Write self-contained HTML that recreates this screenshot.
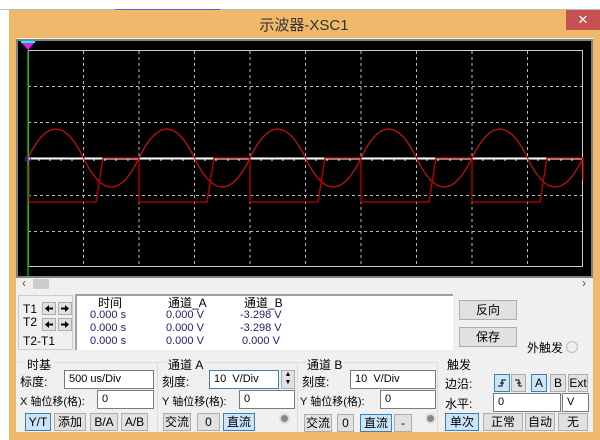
<!DOCTYPE html>
<html><head><meta charset="utf-8"><style>
*{margin:0;padding:0;box-sizing:border-box}
body{width:600px;height:440px;overflow:hidden;background:#fff;font-family:"Liberation Sans","Noto Sans CJK SC",sans-serif;font-size:12px;color:#000;position:relative}
.a{position:absolute}
.btn{position:absolute;background:#e1e1e1;border:1px solid #adadad;text-align:center;font-size:12px;line-height:16px;height:18px}
.sel{background:#cce4f7;border-color:#3c7fb1}
.in{position:absolute;background:#fff;border:1px solid #7a7a7a;height:19px;font-size:11px;line-height:17px;padding-left:4px}
.lbl{position:absolute;font-size:12px;white-space:nowrap}
.grp{position:absolute;border:1px solid #dcdcdc}
.v{position:absolute;color:#202070;font-size:11px;white-space:nowrap}
.btn svg{position:absolute;left:0;top:0}
</style></head><body>
<div class="a" style="left:0;top:0;width:600px;height:10px;background:#fff;border-bottom:1px solid #bbb"></div>
<div class="a" style="left:115px;top:9px;width:105px;height:2px;background:#6060e0"></div>
<div class="a" style="left:9px;top:10px;width:591px;height:430px;background:#f0b86a"></div>
<div class="a" style="left:0;top:0;width:600px;text-align:center;top:14px;font-size:15px;color:#333;left:4px">示波器-XSC1</div>
<div class="a" style="left:566px;top:10px;width:34px;height:20px;background:#c75050;color:#fff;text-align:center;font-size:13px;line-height:20px">✕</div>
<div class="a" style="left:16px;top:38px;width:577px;height:394px;background:#f0f0f0"></div>
<div class="a" style="left:16px;top:39px;width:577px;height:239px;background:#000;border:2px solid #808080"></div>
<svg class="a" style="left:0;top:0" width="600" height="300">
<g stroke="#bbb" stroke-width="1" stroke-dasharray="3,3" fill="none">
<path d="M83.5,51V267M139,51V267M194.5,51V267M250,51V267M305.5,51V267M361,51V267M416.5,51V267M472,51V267M527.5,51V267"/>
<path d="M28,86.5H583M28,122.5H583M28,195.5H583M28,231.5H583"/>
</g>
<rect x="28.5" y="50.5" width="554" height="216" fill="none" stroke="#ccc"/>
<path d="M28,158.5H583" stroke="#fff" stroke-width="2"/>
<path d="M28,158V161M39,158V161M50,158V161M61,158V161M72,158V161M94,158V161M105,158V161M116,158V161M128,158V161M150,158V161M161,158V161M172,158V161M183,158V161M205,158V161M216,158V161M228,158V161M239,158V161M261,158V161M272,158V161M283,158V161M294,158V161M316,158V161M327,158V161M339,158V161M350,158V161M372,158V161M383,158V161M394,158V161M405,158V161M427,158V161M438,158V161M450,158V161M461,158V161M483,158V161M494,158V161M505,158V161M516,158V161M538,158V161M549,158V161M561,158V161M572,158V161" stroke="#fff"/>
<path d="M28,158q27.75,-58 55.5,0t55.5,0t55.5,0t55.5,0t55.5,0t55.5,0t55.5,0t55.5,0t55.5,0t55.5,0" fill="none" stroke="#d01010" stroke-width="1.2"/>
<path d="M29,165V202H96L103,158H139V202H207L214,158H250V202H318L325,158H361V202H429L436,158H472V202H540L547,158H583V180" fill="none" stroke="#c00000" stroke-width="1.3"/>
<path d="M28,51V276" stroke="#0a0" stroke-width="1.5"/>
<path d="M21,42H35L28,50Z" fill="#e020e0"/><path d="M21,42H35" stroke="#0ff" stroke-width="2"/>
<circle cx="28" cy="159" r="2.5" fill="none" stroke="#c0c"/>
</svg>
<div class="a" style="left:18px;top:278px;width:575px;height:14px;background:#f0f0f0"></div>
<div class="a" style="left:22px;top:276px;font-size:12px;color:#555">‹</div>
<div class="a" style="left:33px;top:279px;width:16px;height:10px;background:#cdcdcd"></div>
<div class="a" style="left:582px;top:276px;font-size:12px;color:#555">›</div>
<div class="a" style="left:18px;top:295px;width:55px;height:55px;border:1px solid #ccc"></div>
<div class="lbl" style="left:23px;top:302px">T1</div>
<div class="lbl" style="left:23px;top:315px">T2</div>
<div class="lbl" style="left:23px;top:334px">T2-T1</div>
<div class="btn" style="left:42px;top:302px;width:14px;height:13px"><svg width="12" height="11"><path d="M2,5.5L6,2V4.5H10V6.5H6V9Z" fill="#000"/></svg></div>
<div class="btn" style="left:58px;top:302px;width:14px;height:13px"><svg width="12" height="11"><path d="M10,5.5L6,2V4.5H2V6.5H6V9Z" fill="#000"/></svg></div>
<div class="btn" style="left:42px;top:318px;width:14px;height:13px"><svg width="12" height="11"><path d="M2,5.5L6,2V4.5H10V6.5H6V9Z" fill="#000"/></svg></div>
<div class="btn" style="left:58px;top:318px;width:14px;height:13px"><svg width="12" height="11"><path d="M10,5.5L6,2V4.5H2V6.5H6V9Z" fill="#000"/></svg></div>
<div class="a" style="left:75px;top:294px;width:378px;height:56px;background:#fff;border-top:2px solid #a0a0a0;border-left:2px solid #a0a0a0"></div>
<div class="lbl" style="left:98px;top:294px">时间</div>
<div class="lbl" style="left:168px;top:294px">通道_A</div>
<div class="lbl" style="left:244px;top:294px">通道_B</div>
<div class="v" style="left:90px;top:309px">0.000 s</div><div class="v" style="left:166px;top:309px">0.000 V</div><div class="v" style="left:240px;top:309px">-3.298 V</div>
<div class="v" style="left:90px;top:322px">0.000 s</div><div class="v" style="left:166px;top:322px">0.000 V</div><div class="v" style="left:240px;top:322px">-3.298 V</div>
<div class="v" style="left:90px;top:335px">0.000 s</div><div class="v" style="left:166px;top:335px">0.000 V</div><div class="v" style="left:242px;top:335px">0.000 V</div>
<div class="btn" style="left:459px;top:300px;width:58px;height:20px;line-height:18px">反向</div>
<div class="btn" style="left:459px;top:327px;width:58px;height:20px;line-height:18px">保存</div>
<div class="lbl" style="left:527px;top:339px">外触发</div>
<div class="a" style="left:566px;top:341px;width:12px;height:12px;border-radius:50%;border:1px solid #bbb;background:#eee"></div>
<div class="grp" style="left:18px;top:362px;width:140px;height:70px;border-width:1px 1px 0 0"></div>
<div class="grp" style="left:158px;top:362px;width:140px;height:70px;border-width:1px 1px 0 0"></div>
<div class="grp" style="left:298px;top:362px;width:140px;height:70px;border-width:1px 1px 0 0"></div>
<div class="lbl" style="left:25px;top:356px;background:#f0f0f0;padding:0 2px">时基</div>
<div class="lbl" style="left:166px;top:356px;background:#f0f0f0;padding:0 2px">通道 A</div>
<div class="lbl" style="left:305px;top:356px;background:#f0f0f0;padding:0 2px">通道 B</div>
<div class="lbl" style="left:445px;top:356px;background:#f0f0f0;padding:0 2px">触发</div>
<div class="lbl" style="left:20px;top:373px">标度:</div>
<div class="in" style="left:64px;top:370px;width:90px">500 us/Div</div>
<div class="lbl" style="left:20px;top:393px;font-size:11px">X 轴位移(格):</div>
<div class="in" style="left:97px;top:390px;width:57px">0</div>
<div class="btn sel" style="left:25px;top:413px;width:26px">Y/T</div>
<div class="btn" style="left:54px;top:413px;width:32px">添加</div>
<div class="btn" style="left:90px;top:413px;width:28px">B/A</div>
<div class="btn" style="left:121px;top:413px;width:27px">A/B</div>
<div class="lbl" style="left:162px;top:373px">刻度:</div>
<div class="in" style="left:209px;top:370px;width:70px;border-color:#3c7fb1">10 &nbsp;V/Div</div>
<div class="btn" style="left:281px;top:370px;width:14px;height:19px;font-size:7px;line-height:8px">▲<br>▼</div>
<div class="lbl" style="left:162px;top:393px;font-size:11px">Y 轴位移(格):</div>
<div class="in" style="left:239px;top:390px;width:56px">0</div>
<div class="btn" style="left:163px;top:413px;width:28px">交流</div>
<div class="btn" style="left:197px;top:413px;width:23px">0</div>
<div class="btn sel" style="left:223px;top:413px;width:32px">直流</div>
<div class="a" style="left:279px;top:413px;width:11px;height:11px;border-radius:50%;background:#888;border:2px solid #ddd"></div>
<div class="lbl" style="left:302px;top:373px">刻度:</div>
<div class="in" style="left:350px;top:370px;width:86px">10 &nbsp;V/Div</div>
<div class="lbl" style="left:300px;top:393px;font-size:11px">Y 轴位移(格):</div>
<div class="in" style="left:380px;top:390px;width:56px">0</div>
<div class="btn" style="left:304px;top:414px;width:28px">交流</div>
<div class="btn" style="left:337px;top:414px;width:17px">0</div>
<div class="btn sel" style="left:360px;top:414px;width:32px">直流</div>
<div class="btn" style="left:394px;top:414px;width:18px">-</div>
<div class="a" style="left:425px;top:413px;width:11px;height:11px;border-radius:50%;background:#888;border:2px solid #ddd"></div>
<div class="lbl" style="left:445px;top:375px">边沿:</div>
<div class="btn sel" style="left:494px;top:374px;width:16px"><svg width="14" height="16"><path d="M3,11H7V5H11M5,8H9" stroke="#000" fill="none"/></svg></div>
<div class="btn" style="left:511px;top:374px;width:15px"><svg width="13" height="16"><path d="M3,5H7V11H10M5,8H9" stroke="#000" fill="none"/></svg></div>
<div class="btn sel" style="left:531px;top:374px;width:16px">A</div>
<div class="btn" style="left:550px;top:374px;width:16px">B</div>
<div class="btn" style="left:568px;top:374px;width:20px">Ext</div>
<div class="lbl" style="left:445px;top:395px">水平:</div>
<div class="in" style="left:493px;top:393px;width:68px">0</div>
<div class="in" style="left:562px;top:393px;width:27px">V</div>
<div class="btn sel" style="left:445px;top:413px;width:34px">单次</div>
<div class="btn" style="left:483px;top:413px;width:40px">正常</div>
<div class="btn" style="left:525px;top:413px;width:30px">自动</div>
<div class="btn" style="left:558px;top:413px;width:30px">无</div>
</body></html>
